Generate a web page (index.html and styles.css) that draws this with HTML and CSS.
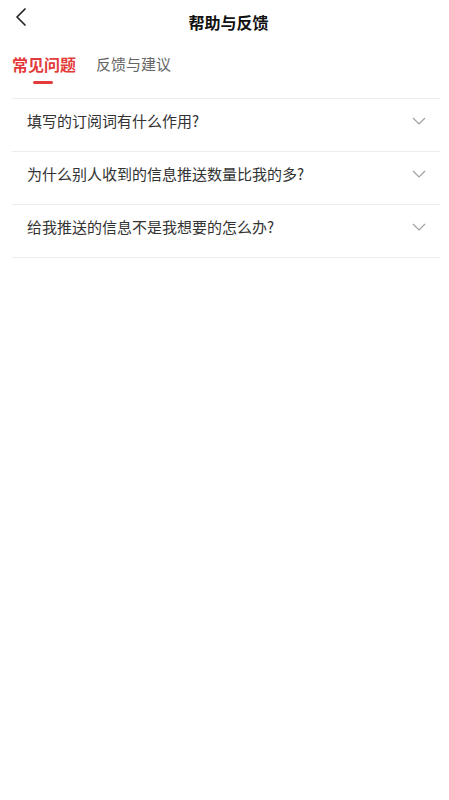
FILE: index.html
```html
<!DOCTYPE html>
<html lang="zh">
<head>
<meta charset="utf-8">
<title>帮助与反馈</title>
<link rel="stylesheet" href="styles.css">
</head>
<body>
<div class="page">
  <header class="nav">
    <span class="back">
      <svg width="14" height="20" viewBox="0 0 14 20"><path d="M11 2 L3 10 L11 18" fill="none" stroke="#222" stroke-width="1.7" stroke-linecap="round" stroke-linejoin="round"/></svg>
    </span>
    <h1 class="title">帮助与反馈</h1>
  </header>
  <nav class="tabs">
    <div class="tab active">常见问题<span class="bar"></span></div>
    <div class="tab">反馈与建议</div>
  </nav>
  <ul class="faq">
    <li class="row"><span class="q">填写的订阅词有什么作用?</span><svg class="chev" width="14" height="8" viewBox="0 0 14 8"><path d="M1 1 L7 7 L13 1" fill="none" stroke="#a0a0a0" stroke-width="1.2"/></svg></li>
    <li class="row"><span class="q">为什么别人收到的信息推送数量比我的多?</span><svg class="chev" width="14" height="8" viewBox="0 0 14 8"><path d="M1 1 L7 7 L13 1" fill="none" stroke="#a0a0a0" stroke-width="1.2"/></svg></li>
    <li class="row"><span class="q">给我推送的信息不是我想要的怎么办?</span><svg class="chev" width="14" height="8" viewBox="0 0 14 8"><path d="M1 1 L7 7 L13 1" fill="none" stroke="#a0a0a0" stroke-width="1.2"/></svg></li>
  </ul>
</div>
</body>
</html>
```
FILE: styles.css
```css
* { box-sizing: border-box; }
html, body { margin: 0; padding: 0; background: #fff; }
body { font-family: "Noto Sans CJK SC", "Noto Sans", sans-serif; color: #333; }
.page { width: 449px; min-height: 800px; }
.nav { position: relative; height: 44px; display: flex; align-items: center; justify-content: center; }
.back { position: absolute; left: 14px; top: 7px; display: flex; }
.title { margin: 0; font-size: 16px; font-weight: 700; color: #111; line-height: 22px; padding-left: 8px; }
.tabs { display: flex; gap: 20px; padding: 7px 0 0 12px; height: 54px; }
.tab { position: relative; font-size: 15px; color: #666; line-height: 26px; }
.tab.active { color: #e33b3b; font-weight: 700; font-size: 16px; }
.bar { position: absolute; left: 21px; top: 30px; width: 20px; height: 3px; border-radius: 2px; background: #e33b3b; }
.faq { list-style: none; margin: 0 9px 0 12px; padding: 0; border-top: 1px solid #ececec; }
.row { display: flex; align-items: center; justify-content: space-between; height: 53px; border-bottom: 1px solid #ececec; padding: 0 14px 9px 15px; }
.q { font-size: 15px; color: #333; }
.chev { display: block; }
```
